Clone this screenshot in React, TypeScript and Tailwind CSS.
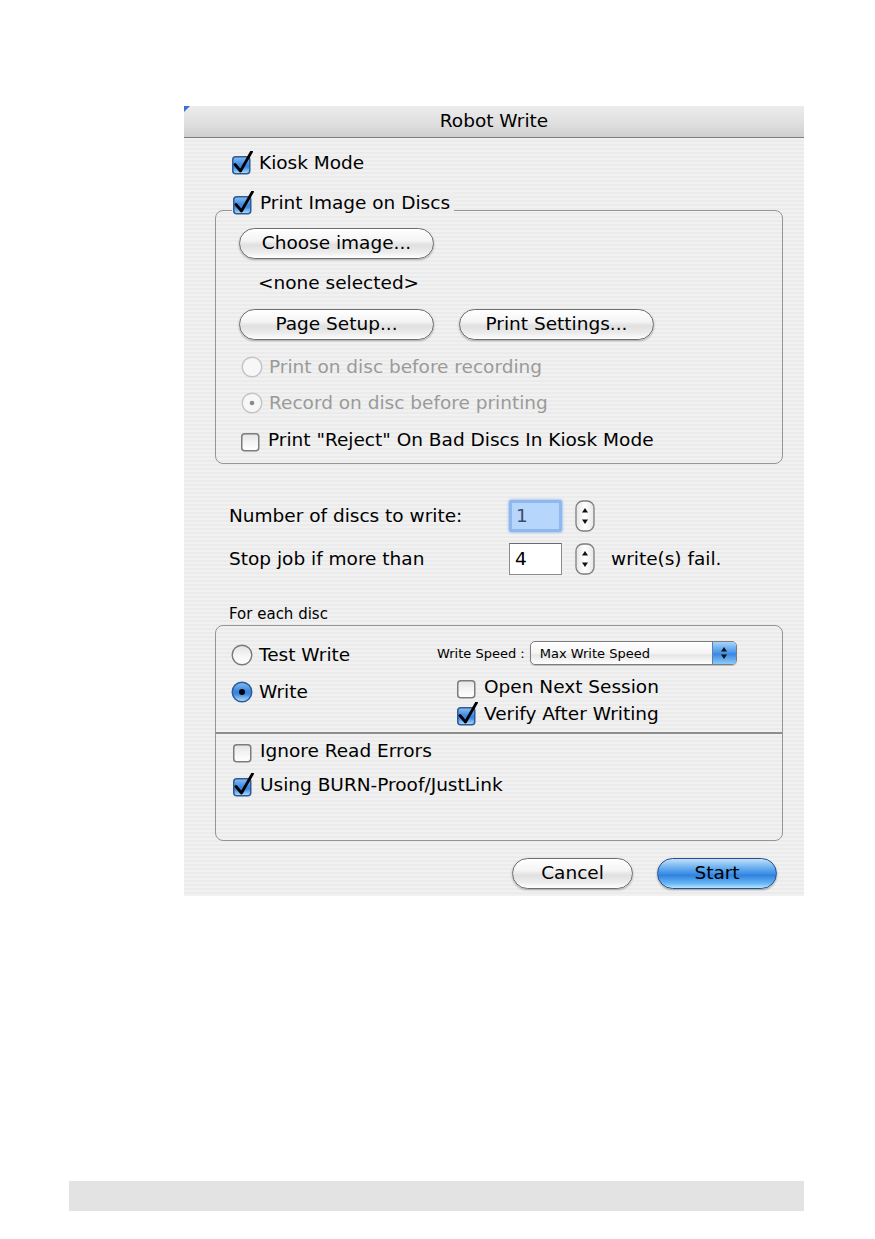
import React from "react";

const FONT = { fontFamily: '"DejaVu Sans", "Lucida Grande", Verdana, sans-serif' };

function CheckBox({ checked }: { checked: boolean }) {
  return (
    <svg width="22" height="24" viewBox="0 0 22 24" className="shrink-0">
      <defs>
        <linearGradient id="cbBlue" x1="0" y1="0" x2="0" y2="1">
          <stop offset="0%" stopColor="#8fc0f0" />
          <stop offset="45%" stopColor="#3f8be3" />
          <stop offset="60%" stopColor="#3a86df" />
          <stop offset="100%" stopColor="#b4e2fc" />
        </linearGradient>
        <linearGradient id="cbWhite" x1="0" y1="0" x2="0" y2="1">
          <stop offset="0%" stopColor="#e4e4e4" />
          <stop offset="50%" stopColor="#f4f4f4" />
          <stop offset="100%" stopColor="#ffffff" />
        </linearGradient>
      </defs>
      <rect
        x="0.75"
        y="5.75"
        width="17"
        height="17"
        rx="3"
        fill={checked ? "url(#cbBlue)" : "url(#cbWhite)"}
        stroke={checked ? "#2f5a98" : "#7c7c7c"}
        strokeWidth="1.5"
      />
      {checked && (
        <path
          d="M3 13.5 L8.5 20 L19.5 0.8"
          fill="none"
          stroke="#000"
          strokeWidth="2.8"
          strokeLinecap="round"
          strokeLinejoin="round"
        />
      )}
    </svg>
  );
}

function Radio({ state }: { state: "off" | "on" | "disabledOff" | "disabledOn" }) {
  const disabled = state === "disabledOff" || state === "disabledOn";
  const on = state === "on";
  return (
    <svg width="22" height="22" viewBox="0 0 22 22" className="shrink-0">
      <defs>
        <linearGradient id="rdBlue" x1="0" y1="0" x2="0" y2="1">
          <stop offset="0%" stopColor="#88bdf1" />
          <stop offset="45%" stopColor="#3a86e0" />
          <stop offset="60%" stopColor="#3a86df" />
          <stop offset="100%" stopColor="#b8e4fc" />
        </linearGradient>
        <linearGradient id="rdWhite" x1="0" y1="0" x2="0" y2="1">
          <stop offset="0%" stopColor="#e2e2e2" />
          <stop offset="55%" stopColor="#f6f6f6" />
          <stop offset="100%" stopColor="#ffffff" />
        </linearGradient>
      </defs>
      <circle
        cx="11"
        cy="11"
        r="9.8"
        fill={on ? "url(#rdBlue)" : disabled ? "#f7f7f7" : "url(#rdWhite)"}
        stroke={on ? "#2f5a98" : disabled ? "#c4c4c4" : "#7a7a7a"}
        strokeWidth="1.4"
      />
      {on && <circle cx="11" cy="11" r="3" fill="#000" />}
      {state === "disabledOn" && <circle cx="11" cy="11" r="2.3" fill="#8a8a8a" />}
    </svg>
  );
}

function Stepper() {
  return (
    <svg width="20" height="32" viewBox="0 0 20 32" className="shrink-0">
      <defs>
        <linearGradient id="stp" x1="0" y1="0" x2="1" y2="0">
          <stop offset="0%" stopColor="#e6e6e6" />
          <stop offset="50%" stopColor="#ffffff" />
          <stop offset="100%" stopColor="#e6e6e6" />
        </linearGradient>
      </defs>
      <rect x="1" y="1" width="18" height="30" rx="7" fill="url(#stp)" stroke="#7e7e7e" strokeWidth="1.3" />
      <path d="M10 8 L13 12.5 L7 12.5 Z" fill="#111" />
      <path d="M10 24 L13 19.5 L7 19.5 Z" fill="#111" />
    </svg>
  );
}

function PillButton({ label, width, blue = false }: { label: string; width: string; blue?: boolean }) {
  return (
    <div
      className={
        blue
          ? `${width} h-[31px] rounded-full border border-[#27508f] bg-[linear-gradient(180deg,#c3e0fa_0%,#6bb0f0_30%,#3f8fe6_50%,#2f82e0_56%,#6ab8f6_85%,#b9e4fc_100%)] flex items-center justify-center shadow-[0_1px_2px_rgba(0,0,0,0.35)] shrink-0`
          : `${width} h-[31px] rounded-full border border-[#6e6e6e] bg-[linear-gradient(180deg,#ffffff_0%,#f4f4f4_40%,#e0e0e0_55%,#ececec_80%,#ffffff_100%)] flex items-center justify-center shadow-[0_1px_2px_rgba(0,0,0,0.3)] shrink-0`
      }
    >
      <span className="text-[18.5px] leading-none text-black">{label}</span>
    </div>
  );
}

function CheckRow({ checked, label, className = "" }: { checked: boolean; label: string; className?: string }) {
  return (
    <div className={`flex items-center gap-[5px] h-[22px] ${className}`}>
      <CheckBox checked={checked} />
      <span className="text-[18.5px] leading-none whitespace-nowrap">{label}</span>
    </div>
  );
}

function RadioRow({
  state,
  label,
  className = "",
}: {
  state: "off" | "on" | "disabledOff" | "disabledOn";
  label: string;
  className?: string;
}) {
  const disabled = state === "disabledOff" || state === "disabledOn";
  return (
    <div className={`flex items-center gap-[6px] h-[22px] ${className}`}>
      <Radio state={state} />
      <span className={`text-[18.5px] leading-none whitespace-nowrap ${disabled ? "text-[#9a9a9a]" : "text-black"}`}>
        {label}
      </span>
    </div>
  );
}

function PopUp() {
  return (
    <div className="w-[207px] h-[24px] rounded-[5px] border border-[#7d7d7d] flex overflow-hidden bg-[linear-gradient(180deg,#ffffff_0%,#f5f5f5_50%,#e6e6e6_60%,#ffffff_100%)] shadow-[0_1px_1px_rgba(0,0,0,0.2)]">
      <div className="flex-1 flex items-center pl-[9px] text-[13px] leading-none">Max Write Speed</div>
      <div className="w-[24px] border-l border-[#5a7fb8] bg-[linear-gradient(180deg,#a9d3f8_0%,#4f9bea_45%,#3a88e2_55%,#8ccaf8_100%)] flex items-center justify-center">
        <svg width="10" height="16" viewBox="0 0 10 16">
          <path d="M5 2 L8 6.5 L2 6.5 Z" fill="#111" />
          <path d="M5 14 L8 9.5 L2 9.5 Z" fill="#111" />
        </svg>
      </div>
    </div>
  );
}

export default function App() {
  return (
    <div className="w-[875px] min-h-[1239px] bg-white pt-[106px] text-black" style={FONT}>
      {/* dialog window */}
      <div className="relative ml-[184px] w-[620px] flex flex-col">
        <svg width="6" height="6" viewBox="0 0 6 6" className="absolute left-0 top-0">
          <path d="M0 0 L6 0 L0 6 Z" fill="#3b6fd0" />
        </svg>
        {/* title bar */}
        <div className="h-[32px] border-b border-[#7e7e7e] bg-[linear-gradient(180deg,#ececec_0%,#dedede_60%,#cfcfcf_100%)] flex items-center justify-center">
          <span className="text-[18.5px] leading-none">Robot Write</span>
        </div>

        {/* body */}
        <div className="flex flex-col bg-[repeating-linear-gradient(180deg,#f1f1f1_0px,#f1f1f1_2px,#ebebeb_2px,#ebebeb_4px)] pl-[31px] pr-[21px] pt-[14px] pb-[7px]">
          <CheckRow checked label="Kiosk Mode" className="ml-[17px]" />

          {/* print image group */}
          <div className="relative mt-[36px] h-[254px] rounded-[8px] border border-[#959595] pl-[23px] flex flex-col">
            <div className="absolute left-[16px] top-[-19px] pl-[1px] pr-[4px] bg-[#eeeeee]">
              <CheckRow checked label="Print Image on Discs" />
            </div>
            <div className="mt-[17px]">
              <PillButton label="Choose image..." width="w-[195px]" />
            </div>
            <div className="mt-[13px] h-[22px] flex items-center pl-[19px] text-[18.5px] leading-none">
              &lt;none selected&gt;
            </div>
            <div className="mt-[15px] flex gap-[25px]">
              <PillButton label="Page Setup..." width="w-[195px]" />
              <PillButton label="Print Settings..." width="w-[195px]" />
            </div>
            <RadioRow state="disabledOff" label="Print on disc before recording" className="mt-[16px] ml-[2px]" />
            <RadioRow state="disabledOn" label="Record on disc before printing" className="mt-[14px] ml-[2px]" />
            <CheckRow checked={false} label={'Print "Reject" On Bad Discs In Kiosk Mode'} className="mt-[15px] ml-[2px]" />
          </div>

          {/* counters */}
          <div className="mt-[36px] flex items-center h-[32px] pl-[14px]">
            <span className="w-[280px] text-[18.5px] leading-none">Number of discs to write:</span>
            <div className="w-[53px] h-[32px] rounded-[2px] border-[3px] border-[#8fb8f0] shadow-[0_0_3px_#6aa0e8] bg-[#b7d6fc] flex items-center pl-[4px]">
              <span className="text-[18.5px] leading-none text-[#3c4c6c]">1</span>
            </div>
            <div className="ml-[13px]">
              <Stepper />
            </div>
          </div>
          <div className="mt-[11px] flex items-center h-[32px] pl-[14px]">
            <span className="w-[280px] text-[18.5px] leading-none">Stop job if more than</span>
            <div className="w-[53px] h-[32px] border border-[#8c8c8c] border-t-[#6a6a6a] bg-white flex items-center pl-[5px]">
              <span className="text-[18.5px] leading-none">4</span>
            </div>
            <div className="ml-[13px]">
              <Stepper />
            </div>
            <span className="ml-[16px] text-[18.5px] leading-none">write(s) fail.</span>
          </div>

          <div className="mt-[30px] h-[18px] flex items-center pl-[14px] text-[15px] leading-none">For each disc</div>

          {/* per-disc group */}
          <div className="mt-[2px] h-[216px] rounded-[8px] border border-[#959595] flex flex-col">
            <div className="h-[108px] border-b-2 border-b-[#8e8e8e] flex pl-[15px]">
              <div className="w-[206px] flex flex-col pt-[18px]">
                <RadioRow state="off" label="Test Write" />
                <RadioRow state="on" label="Write" className="mt-[15px]" />
              </div>
              <div className="flex flex-col pt-[15px]">
                <div className="flex items-center h-[24px] gap-[5px]">
                  <span className="text-[13px] leading-none">Write Speed :</span>
                  <PopUp />
                </div>
                <CheckRow checked={false} label="Open Next Session" className="mt-[11px] ml-[20px]" />
                <CheckRow checked label="Verify After Writing" className="mt-[5px] ml-[20px]" />
              </div>
            </div>
            <div className="flex flex-col pl-[17px]">
              <CheckRow checked={false} label="Ignore Read Errors" className="mt-[6px]" />
              <CheckRow checked label="Using BURN-Proof/JustLink" className="mt-[12px]" />
            </div>
          </div>

          {/* dialog buttons */}
          <div className="mt-[17px] flex justify-end gap-[24px] pr-[6px]">
            <PillButton label="Cancel" width="w-[121px]" />
            <PillButton label="Start" width="w-[120px]" blue />
          </div>
        </div>
      </div>

      {/* footer band */}
      <div className="mt-[285px] ml-[69px] w-[735px] h-[30px] bg-[#e3e3e3]" />
    </div>
  );
}
